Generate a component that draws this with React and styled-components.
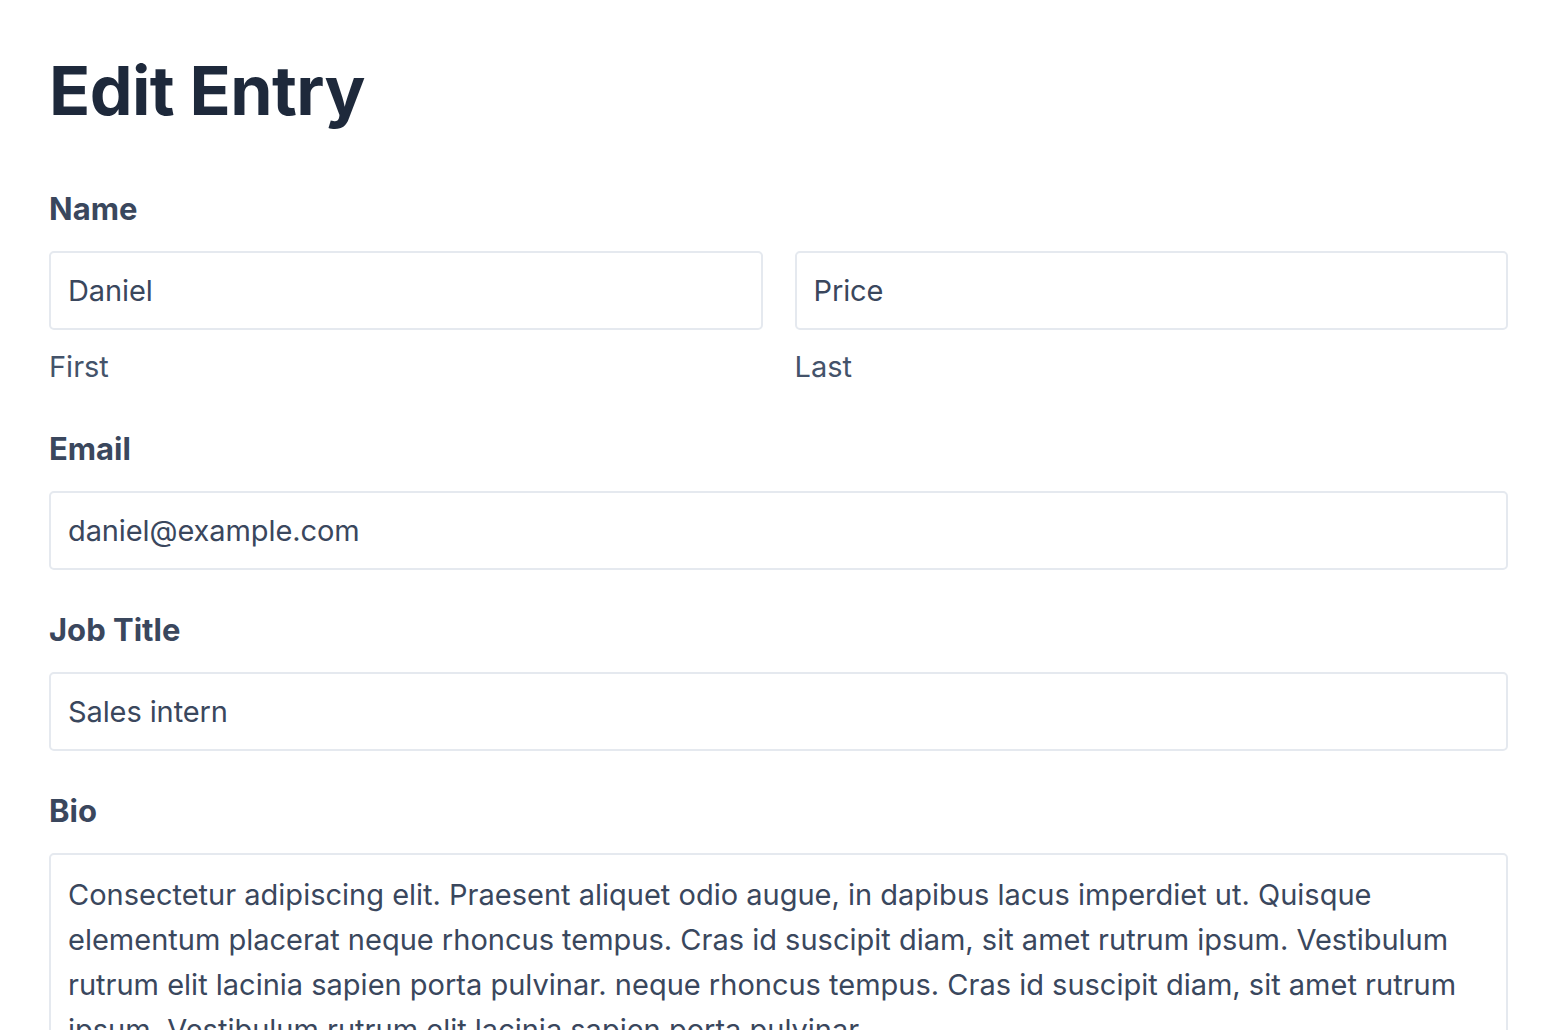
import React, { useState } from "react"
import styled, { createGlobalStyle } from "styled-components"

const GlobalStyle = createGlobalStyle`
  * {
    box-sizing: border-box;
  }

  body {
    margin: 0;
    background: #ffffff;
    font-family: Inter, "Noto Sans", sans-serif;
    -webkit-font-smoothing: antialiased;
  }
`

const Page = styled.main`
  padding: 50px 48px 0 49px;
  height: 1030px;
  overflow: hidden;
`

const Heading = styled.h1`
  margin: 0 0 56px;
  font-size: 68px;
  line-height: 80px;
  font-weight: 700;
  letter-spacing: -0.6px;
  color: #1e293b;
`

const Form = styled.form`
  display: flex;
  flex-direction: column;
  gap: 37px;
`

const Field = styled.div`
  display: flex;
  flex-direction: column;
`

const Label = styled.label`
  margin-bottom: 20px;
  font-size: 31px;
  line-height: 45px;
  font-weight: 700;
  color: #3a475d;
`

const Columns = styled.div`
  display: grid;
  grid-template-columns: 1fr 1fr;
  gap: 32px;
`

const Column = styled.div`
  display: flex;
  flex-direction: column;
`

const Input = styled.input`
  width: 100%;
  height: 79px;
  padding: 0 17px;
  border: 2px solid #e5e9ef;
  border-radius: 5px;
  font-family: inherit;
  font-size: 29px;
  letter-spacing: -0.1px;
  color: #3a475d;
  background: #ffffff;
  outline: none;
`

const TextArea = styled.textarea`
  width: 100%;
  height: 260px;
  padding: 17px 17px;
  border: 2px solid #e5e9ef;
  border-radius: 5px;
  font-family: inherit;
  font-size: 29px;
  line-height: 45px;
  color: #3a475d;
  background: #ffffff;
  outline: none;
  resize: none;
`

const Hint = styled.span`
  margin-top: 14px;
  font-size: 29px;
  line-height: 45px;
  color: #44536a;
`

const bio =
  "Consectetur adipiscing elit. Praesent aliquet odio augue, in dapibus lacus imperdiet ut. Quisque elementum placerat neque rhoncus tempus. Cras id suscipit diam, sit amet rutrum ipsum. Vestibulum rutrum elit lacinia sapien porta pulvinar. neque rhoncus tempus. Cras id suscipit diam, sit amet rutrum ipsum. Vestibulum rutrum elit lacinia sapien porta pulvinar."

export default function App() {
  const [entry, setEntry] = useState({
    first: "Daniel",
    last: "Price",
    email: "daniel@example.com",
    title: "Sales intern",
    bio,
  })

  const update = (key) => (e) => setEntry({ ...entry, [key]: e.target.value })

  return (
    <>
      <GlobalStyle />
      <Page>
        <Heading>Edit Entry</Heading>
        <Form onSubmit={(e) => e.preventDefault()}>
          <Field>
            <Label>Name</Label>
            <Columns>
              <Column>
                <Input value={entry.first} onChange={update("first")} />
                <Hint>First</Hint>
              </Column>
              <Column>
                <Input value={entry.last} onChange={update("last")} />
                <Hint>Last</Hint>
              </Column>
            </Columns>
          </Field>
          <Field>
            <Label htmlFor="email">Email</Label>
            <Input id="email" value={entry.email} onChange={update("email")} />
          </Field>
          <Field>
            <Label htmlFor="title">Job Title</Label>
            <Input id="title" value={entry.title} onChange={update("title")} />
          </Field>
          <Field>
            <Label htmlFor="bio">Bio</Label>
            <TextArea id="bio" value={entry.bio} onChange={update("bio")} />
          </Field>
        </Form>
      </Page>
    </>
  )
}
